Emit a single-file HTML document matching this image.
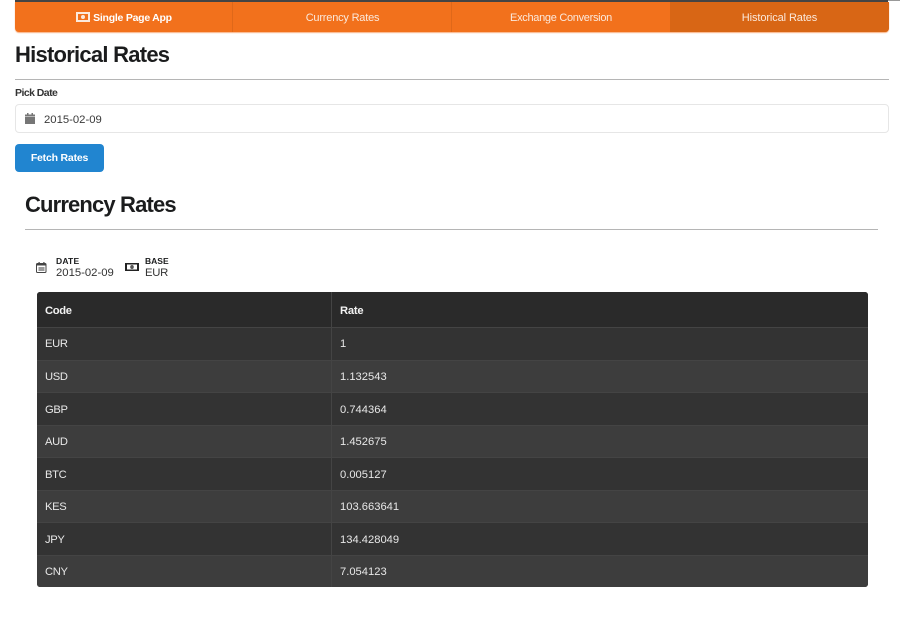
<!DOCTYPE html>
<html lang="en">
<head>
<meta charset="utf-8">
<title>Historical Rates</title>
<style>
html,body{margin:0;padding:0;background:#fff}
body{width:900px;height:622px;position:relative;overflow:hidden;font-family:"Liberation Sans",sans-serif;color:#212121}
.a{position:absolute;white-space:nowrap}
#top{left:15px;top:0;width:873px;height:2px;background:#444}
#top2{left:888px;top:0;width:12px;height:1px;background:#999}
#nav{left:15px;top:2px;width:874px;height:30px;background:#f2711c;border-radius:0 0 4px 4px;box-shadow:0 1px 1px rgba(242,113,28,.55);overflow:hidden}
.sep{position:absolute;top:0;width:1px;height:30px;background:rgba(0,0,0,.08)}
#act{position:absolute;left:655px;top:0;width:219px;height:30px;background:#d86615}
.nt{position:absolute;top:1px;height:30px;line-height:30px;text-align:center;color:#fbe9dc;font-size:11px}
.h{font-weight:700;color:#1b1c1d;font-size:22px;line-height:28px}
.hr{height:1px;background:#b5b5b5}
#lab{left:15px;top:87px;font-size:10.5px;line-height:13px;font-weight:700;color:#333;letter-spacing:-.55px}
#inp{left:15px;top:104px;width:872px;height:27px;border:1px solid #e6e6e6;border-radius:4px;background:#fff}
#val{left:44px;top:113px;font-size:11.3px;line-height:14px;color:#3a3a3a}
#btn{left:15px;top:144px;width:89px;height:28px;background:#2185d0;border-radius:4px;color:#fff;font-size:10.5px;font-weight:700;line-height:28px;text-align:center;letter-spacing:-.2px}
.lbl{font-size:8.5px;line-height:10px;font-weight:700;color:#1b1c1d}
.v{font-size:11.3px;line-height:13px;color:#333}
#tb{left:37px;top:292px;width:831px;height:295px;background:#333;border-radius:3px;overflow:hidden;color:#e8e8e8;font-size:11.2px}
.r{position:absolute;left:0;width:831px;border-top:1px solid #444}
.r span{position:absolute;top:0;height:100%;display:flex;align-items:center}
.r.d span{top:1px}
.c1{left:8px;letter-spacing:-.35px}.c2{left:303px}
.vl{position:absolute;left:294px;top:0;width:1px;height:295px;background:#444}
</style>
</head>
<body>
<div class="a" id="top"></div>
<div class="a" id="top2"></div>
<div class="a" id="nav">
  <div id="act"></div>
  <div class="sep" style="left:217px"></div>
  <div class="sep" style="left:436px"></div>
  <div class="nt" style="left:0;width:218px;font-weight:700;color:#fff;font-size:10.5px;letter-spacing:-.25px">
    <svg width="14" height="10" viewBox="0 0 14 10" style="vertical-align:-1px;margin-right:3px"><path fill="#fbe9dc" fill-rule="evenodd" d="M0 0h14v10H0zM2 2v6h10V2zM7 3a2 2 0 1 1 0 4a2 2 0 0 1 0-4z"/></svg>Single Page App
  </div>
  <div class="nt" style="left:218px;width:219px;letter-spacing:-.2px">Currency Rates</div>
  <div class="nt" style="left:437px;width:218px;letter-spacing:-.3px">Exchange Conversion</div>
  <div class="nt" style="left:655px;width:219px;letter-spacing:-.1px">Historical Rates</div>
</div>

<div class="a h" style="left:15px;top:41px;letter-spacing:-.75px">Historical Rates</div>
<div class="a hr" style="left:15px;top:79px;width:874px"></div>
<div class="a" id="lab">Pick Date</div>
<div class="a" id="inp"></div>
<svg class="a" style="left:25px;top:113px" width="10" height="11" viewBox="0 0 10 11"><path fill="#767676" d="M0 1.500h2V0h1.500v1.500h3V0H8v1.500h2V3.500H0zM0 4h10v7H0z"/></svg>
<div class="a" id="val">2015-02-09</div>
<div class="a" id="btn">Fetch Rates</div>

<div class="a h" style="left:25px;top:191px;letter-spacing:-.85px">Currency Rates</div>
<div class="a hr" style="left:25px;top:229px;width:853px"></div>

<svg class="a" style="left:36px;top:262px" width="11" height="11" viewBox="0 0 11 11"><rect x=".5" y="1.500" width="9.500" height="9" rx="1" fill="#fff" stroke="#444"/><path fill="#444" d="M1 2h9v1.500H1zM2.500 0h1.200v2.500H2.500zM7.300 0h1.200v2.500H7.300z"/><path fill="#9a9a9a" d="M2.500 5h6v4h-6z"/></svg>
<div class="a lbl" style="left:56px;top:256px;letter-spacing:.2px">DATE</div>
<div class="a v" style="left:56px;top:267px">2015-02-09</div>
<svg class="a" style="left:125px;top:262px" width="14" height="10" viewBox="0 0 14 10"><path fill="#222" fill-rule="evenodd" d="M0 1h14v8H0zM2 2.500v5h10v-5z"/><ellipse cx="7" cy="5" rx="1.800" ry="2" fill="#555"/></svg>
<div class="a lbl" style="left:145px;top:256px">BASE</div>
<div class="a v" style="left:145px;top:267px;letter-spacing:-.3px">EUR</div>

<div class="a" id="tb">
  <div class="r d" style="top:0;height:35px;background:#2a2a2a;border-top:0;font-weight:700;color:#f2f2f2"><span class="c1">Code</span><span class="c2" style="letter-spacing:-.2px">Rate</span></div>
  <div class="r" style="top:35px;height:32px;background:#333"><span class="c1">EUR</span><span class="c2">1</span></div>
  <div class="r" style="top:68px;height:31px;background:#3d3d3d"><span class="c1">USD</span><span class="c2">1.132543</span></div>
  <div class="r d" style="top:100px;height:32px;background:#333"><span class="c1">GBP</span><span class="c2">0.744364</span></div>
  <div class="r" style="top:133px;height:31px;background:#3d3d3d"><span class="c1">AUD</span><span class="c2">1.452675</span></div>
  <div class="r d" style="top:165px;height:32px;background:#333"><span class="c1">BTC</span><span class="c2">0.005127</span></div>
  <div class="r" style="top:198px;height:31px;background:#3d3d3d"><span class="c1">KES</span><span class="c2">103.663641</span></div>
  <div class="r d" style="top:230px;height:32px;background:#333"><span class="c1">JPY</span><span class="c2">134.428049</span></div>
  <div class="r" style="top:263px;height:32px;background:#3d3d3d"><span class="c1">CNY</span><span class="c2">7.054123</span></div>
  <div class="vl"></div>
</div>
</body>
</html>
